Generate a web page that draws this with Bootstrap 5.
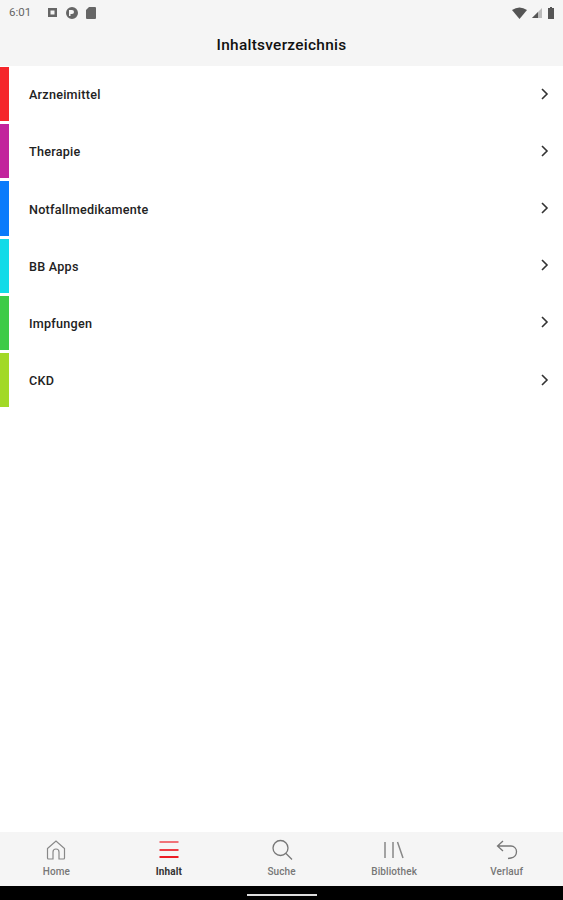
<!DOCTYPE html>
<html lang="de">
<head>
    <meta charset="UTF-8">
    <meta name="viewport" content="width=device-width, initial-scale=1.0">
    <title>Inhaltsverzeichnis</title>
    <link href="https://cdn.jsdelivr.net/npm/bootstrap@5.3.0/dist/css/bootstrap.min.css" rel="stylesheet">
    <style>
        body { font-family: Roboto, "Liberation Sans", sans-serif; background: #fff; }
        .app-shell { height: 900px; overflow: hidden; }
        .top-area { background: #f5f5f5; height: 66px; }
        .status-row { height: 25px; padding: 0 8px 0 9px; color: #666; font-size: 11.5px; }
        .status-time { width: 38px; }
        .status-icons { gap: 6px; }
        .page-title { font-size: 15.4px; font-weight: 500; color: #111; height: 41px; padding-top: 1px; letter-spacing: .28px; }
        .toc-row { height: 57.2px; padding-bottom: 2px; color: #222; text-decoration: none; }
        .toc-bar { width: 9px; align-self: stretch; margin-top: 1px; }
        .toc-label { margin-left: 20px; padding-top: 4px; font-size: 12.6px; font-weight: 500; letter-spacing: .25px; }
        .toc-chevron { margin-right: 13px; }
        .tab-bar { background: #f5f5f5; height: 54px; }
        .tab-item { width: 112.6px; color: #777; font-size: 10px; font-weight: 500; text-decoration: none; padding-top: 6px; letter-spacing: .1px; }
        .tab-item svg { display: block; height: 24px; margin-bottom: 2px; }
        .tab-item.is-active { color: #333; font-weight: 700; }
        .gesture-bar { background: #000; height: 14px; padding-top: 8px; }
        .gesture-handle { width: 70px; height: 2px; background: #ddd; }
    </style>
</head>
<body>
    <div class="app-shell d-flex flex-column">
        <div class="top-area">
            <div class="status-row d-flex align-items-center">
                <span class="status-time">6:01</span>
                <div class="status-icons d-flex align-items-center flex-grow-1">
                    <svg width="12" height="12" viewBox="0 0 12 12"><path fill="#666" fill-rule="evenodd" d="M1 1h9v9H1zM3.500 3.500v4h4v-4z"/></svg>
                    <svg width="14" height="14" viewBox="0 0 14 14"><path fill="#666" fill-rule="evenodd" d="M7 1a6 6 0 1 1 0 12A6 6 0 0 1 7 1zM4 4v6h1.500V8H7a2 2 0 0 0 0-4z"/></svg>
                    <svg width="12" height="13" viewBox="0 0 12 13"><path fill="#666" d="M4 1h6a1 1 0 0 1 1 1v10a1 1 0 0 1-1 1H2a1 1 0 0 1-1-1V4z"/></svg>
                </div>
                <div class="d-flex align-items-center">
                    <svg width="15" height="12" viewBox="0 0 15 12"><path fill="#555" d="M0 3Q7.500-2 15 3L7.500 12z"/></svg>
                    <svg width="12" height="12" viewBox="0 0 12 12" class="ms-1"><path fill="#bbb" d="M11 1v10H1z"/><path fill="#555" d="M7 5v6H1z"/></svg>
                    <svg width="8" height="12" viewBox="0 0 8 12" class="ms-1"><path fill="#555" d="M3 0h2v1h2v11H1V1h2z"/></svg>
                </div>
            </div>
            <div class="page-title d-flex align-items-center justify-content-center">Inhaltsverzeichnis</div>
        </div>

        <div class="flex-grow-1" id="tocList"></div>

        <nav class="tab-bar d-flex justify-content-center">
            <a class="tab-item d-flex flex-column align-items-center" href="#">
                <svg width="24" height="24" viewBox="0 0 24 24" fill="none" stroke="#888" stroke-width="1.200"><path d="M3.500 10.500 12 3l8.500 7.500V20a1 1 0 0 1-1 1H15v-7a3 3 0 0 0-6 0v7H4.500a1 1 0 0 1-1-1z"/></svg>
                Home
            </a>
            <a class="tab-item is-active d-flex flex-column align-items-center" href="#">
                <svg width="24" height="24" viewBox="0 0 24 24" fill="none" stroke="#ec1c24" stroke-width="2"><path d="M2.500 4h19" stroke-opacity=".6"/><path d="M2.500 12h19" stroke-opacity=".85"/><path d="M2.500 19h19"/></svg>
                Inhalt
            </a>
            <a class="tab-item d-flex flex-column align-items-center" href="#">
                <svg width="24" height="24" viewBox="0 0 24 24" fill="none" stroke="#777" stroke-width="1.300"><circle cx="10.500" cy="10" r="7.500"/><path d="m16 15.500 6 6"/></svg>
                Suche
            </a>
            <a class="tab-item d-flex flex-column align-items-center" href="#">
                <svg width="24" height="24" viewBox="0 0 24 24" fill="none" stroke="#888" stroke-width="1.500"><path d="M3 4v16M11 4v16M15.500 4 21 20"/></svg>
                Bibliothek
            </a>
            <a class="tab-item d-flex flex-column align-items-center" href="#">
                <svg width="24" height="24" viewBox="0 0 24 24" fill="none" stroke="#777" stroke-width="1.300"><path d="M8 3 2.500 8 8 13M2.500 8H16a5.500 5.500 0 0 1 5.500 5.500c0 3.500-2.500 6-5.500 6.500l-3 .5"/></svg>
                Verlauf
            </a>
        </nav>
        <div class="gesture-bar">
            <div class="gesture-handle mx-auto"></div>
        </div>
    </div>

    <script>
        const tocItems = [
            { label: 'Arzneimittel', color: '#f5262b' },
            { label: 'Therapie', color: '#c2249c' },
            { label: 'Notfallmedikamente', color: '#0a7bfb' },
            { label: 'BB Apps', color: '#12dbe8' },
            { label: 'Impfungen', color: '#3ecb47' },
            { label: 'CKD', color: '#a2d927' }
        ];
        const tocList = document.getElementById('tocList');
        tocItems.forEach(item => {
            const row = document.createElement('a');
            row.href = '#';
            row.className = 'toc-row d-flex align-items-center';
            row.innerHTML = `
                <span class="toc-bar" style="background: ${item.color}"></span>
                <span class="toc-label flex-grow-1">${item.label}</span>
                <svg class="toc-chevron" width="11" height="14" viewBox="0 0 11 14" fill="none" stroke="#333" stroke-width="1.600"><path d="m3 2 5 5-5 5"/></svg>
            `;
            tocList.appendChild(row);
        });
    </script>

    <script src="https://cdn.jsdelivr.net/npm/bootstrap@5.3.0/dist/js/bootstrap.bundle.min.js"></script>
</body>
</html>
